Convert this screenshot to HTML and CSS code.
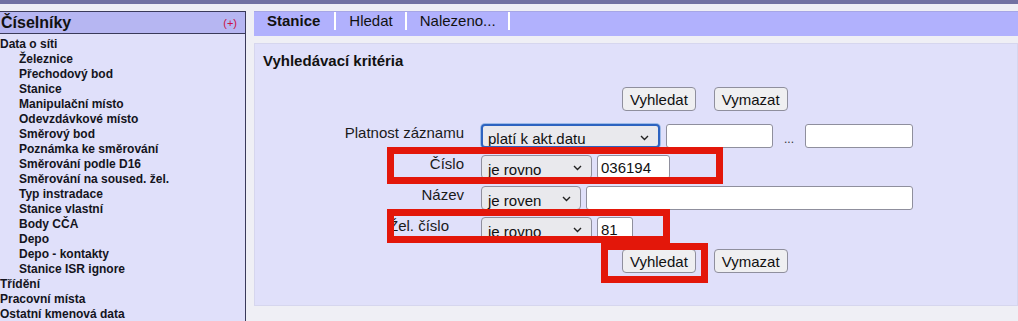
FILE: index.html
```html
<!DOCTYPE html>
<html lang="cs">
<head>
  <meta charset="UTF-8" />
  <title>Číselníky - Stanice</title>
  <link rel="stylesheet" href="styles.css">
</head>
<body>
  <div class="topbar"></div>

  <div class="layout">
    <aside class="sidebar">
      <div class="sidebar-head">
        <span class="sidebar-title">Číselníky</span>
        <span class="sidebar-plus">(+)</span>
      </div>
      <ul class="menu">
        <li>Data o síti</li>
        <li class="sub">Železnice</li>
        <li class="sub">Přechodový bod</li>
        <li class="sub">Stanice</li>
        <li class="sub">Manipulační místo</li>
        <li class="sub">Odevzdávkové místo</li>
        <li class="sub">Směrový bod</li>
        <li class="sub">Poznámka ke směrování</li>
        <li class="sub">Směrování podle D16</li>
        <li class="sub">Směrování na soused. žel.</li>
        <li class="sub">Typ instradace</li>
        <li class="sub">Stanice vlastní</li>
        <li class="sub">Body CČA</li>
        <li class="sub">Depo</li>
        <li class="sub">Depo - kontakty</li>
        <li class="sub">Stanice ISR ignore</li>
        <li>Třídění</li>
        <li>Pracovní místa</li>
        <li>Ostatní kmenová data</li>
      </ul>
    </aside>

    <main class="main">
      <nav class="tabs">
        <div class="tab active">Stanice</div>
        <div class="tab">Hledat</div>
        <div class="tab">Nalezeno...</div>
      </nav>

      <section class="panel">
        <h3 class="panel-title">Vyhledávací kritéria</h3>

        <div class="criteria">
          <div></div>
          <div class="buttons top-buttons">
            <button class="btn">Vyhledat</button>
            <button class="btn">Vymazat</button>
          </div>

          <label class="lbl">Platnost záznamu</label>
          <div class="ctrls">
            <span class="sel sel-focus w179">platí k akt.datu<svg class="chev" width="9" height="6" viewBox="0 0 9 6"><path d="M1 1l3.5 3.5L8 1" fill="none" stroke="#222" stroke-width="1.4"/></svg></span>
            <input class="inp w107" type="text">
            <span class="dots">...</span>
            <input class="inp w108" type="text">
          </div>

          <label class="lbl">Číslo</label>
          <div class="ctrls">
            <span class="sel w111">je rovno<svg class="chev" width="9" height="6" viewBox="0 0 9 6"><path d="M1 1l3.5 3.5L8 1" fill="none" stroke="#222" stroke-width="1.4"/></svg></span>
            <input class="inp w73" type="text" value="036194">
          </div>

          <label class="lbl">Název</label>
          <div class="ctrls">
            <span class="sel w100">je roven<svg class="chev" width="9" height="6" viewBox="0 0 9 6"><path d="M1 1l3.5 3.5L8 1" fill="none" stroke="#222" stroke-width="1.4"/></svg></span>
            <input class="inp w327" type="text">
          </div>

          <label class="lbl lbl-short">Žel. číslo</label>
          <div class="ctrls">
            <span class="sel w111">je rovno<svg class="chev" width="9" height="6" viewBox="0 0 9 6"><path d="M1 1l3.5 3.5L8 1" fill="none" stroke="#222" stroke-width="1.4"/></svg></span>
            <input class="inp w36" type="text" value="81">
          </div>

          <div></div>
          <div class="buttons bottom-buttons">
            <button class="btn">Vyhledat</button>
            <button class="btn">Vymazat</button>
          </div>
        </div>

        <!-- annotation boxes drawn over the form -->
        <div class="mark mark-cislo"></div>
        <div class="mark mark-zel"></div>
        <div class="mark mark-btn"></div>
      </section>
    </main>
  </div>
</body>
</html>
```

FILE: styles.css
```css
body {
  margin: 0;
  font-family: 'Liberation Sans', Arial, sans-serif;
  background-color: #f0f0f2;
  color: #111;
  overflow: hidden;
}

.topbar {
  height: 4px;
  background-color: #7272a2;
}

.layout {
  display: flex;
  align-items: flex-start;
  padding-top: 7px;
  background-color: #efeff5;
}

/* left menu */
.sidebar {
  width: 245px;
  height: 320px;
  flex-shrink: 0;
  background-color: #e0e0fa;
  border-top: 1px solid #3a3a5a;
  border-right: 1px solid #3a3a5a;
}

.sidebar-head {
  height: 21px;
  display: flex;
  justify-content: space-between;
  align-items: center;
  background-color: #b6b6f2;
  border-bottom: 1px solid #3a3a5a;
  padding: 0 8px 0 1px;
}

.sidebar-title {
  font-size: 16px;
  font-weight: 700;
  color: #111;
}

.sidebar-plus {
  font-size: 11px;
  color: #cc1144;
}

.menu {
  list-style: none;
  margin: 0;
  padding: 3px 0 0 0;
}

.menu li {
  font-size: 12px;
  font-weight: 700;
  line-height: 15px;
  color: #141420;
}

.menu li.sub {
  padding-left: 19px;
}

/* right part */
.main {
  flex: 1;
  margin-left: 8px;
}

.tabs {
  height: 24px;
  display: flex;
  align-items: flex-start;
  background-color: #b1b1fd;
  border-top: 1px solid #a6a6e6;
}

.tab {
  height: 18px;
  line-height: 18px;
  padding: 0 12px 0 13px;
  font-size: 15px;
  color: #111;
  border-right: 2px solid #ffffff;
}

.tab.active {
  font-weight: 700;
  padding-right: 14px;
}

.panel {
  position: relative;
  margin-top: 7px;
  height: 253px;
  background-color: #e0e0fa;
  border: 1px solid #d6d6ee;
  padding: 8px 0 0 8px;
}

.panel-title {
  margin: 0;
  font-size: 15px;
  line-height: 18px;
  font-weight: 700;
  color: #111;
}

.criteria {
  display: grid;
  grid-template-columns: 201px auto;
  column-gap: 17px;
  row-gap: 7px;
  margin-top: 17px;
}

.lbl {
  font-size: 15px;
  line-height: 18px;
  text-align: right;
  color: #1a1a1a;
}

.lbl-short {
  padding-right: 15px;
}

.ctrls {
  display: flex;
  align-items: center;
  gap: 5px;
  height: 24px;
}

.buttons {
  display: flex;
  gap: 18px;
  padding-left: 141px;
}

.top-buttons {
  margin-bottom: 6px;
}

.bottom-buttons {
  margin-top: 1px;
}

.btn {
  height: 24px;
  padding: 0 7px;
  font-family: 'Liberation Sans', Arial, sans-serif;
  font-size: 15px;
  color: #111;
  background-color: #efeff1;
  border: 1px solid #8f8f9d;
  border-radius: 4px;
}

.sel {
  position: relative;
  box-sizing: border-box;
  height: 24px;
  padding: 4px 0 0 6px;
  font-size: 15px;
  line-height: 19px;
  color: #111;
  background-color: #e9e9ed;
  border: 1px solid #8f8f9d;
  border-radius: 4px;
  overflow: hidden;
  white-space: nowrap;
}

.sel-focus {
  border: 2px solid #2d63c0;
  padding: 3px 0 0 5px;
  box-shadow: 0 0 0 1px #9dbbe8;
}

.chev {
  position: absolute;
  right: 9px;
  top: 9px;
}

.inp {
  box-sizing: border-box;
  height: 24px;
  padding: 0 3px;
  font-family: 'Liberation Sans', Arial, sans-serif;
  font-size: 15px;
  color: #111;
  background-color: #ffffff;
  border: 1px solid #8f8f9d;
  border-radius: 3px;
}

.dots {
  width: 22px;
  padding-top: 6px;
  text-align: center;
  font-size: 12px;
  color: #333;
}

.w179 { width: 179px; margin-right: 1px; }
.w111 { width: 111px; }
.w100 { width: 100px; }
.w107 { width: 107px; }
.w108 { width: 108px; }
.w73 { width: 73px; }
.w36 { width: 36px; }
.w327 { width: 327px; }

/* red annotation frames */
.mark {
  position: absolute;
  border: 7px solid #e3170a;
  box-sizing: border-box;
}

.mark-cislo {
  left: 132px;
  top: 103px;
  width: 336px;
  height: 37px;
}

.mark-zel {
  left: 132px;
  top: 165px;
  width: 283px;
  height: 34px;
}

.mark-btn {
  left: 346px;
  top: 199px;
  width: 107px;
  height: 40px;
}
```
